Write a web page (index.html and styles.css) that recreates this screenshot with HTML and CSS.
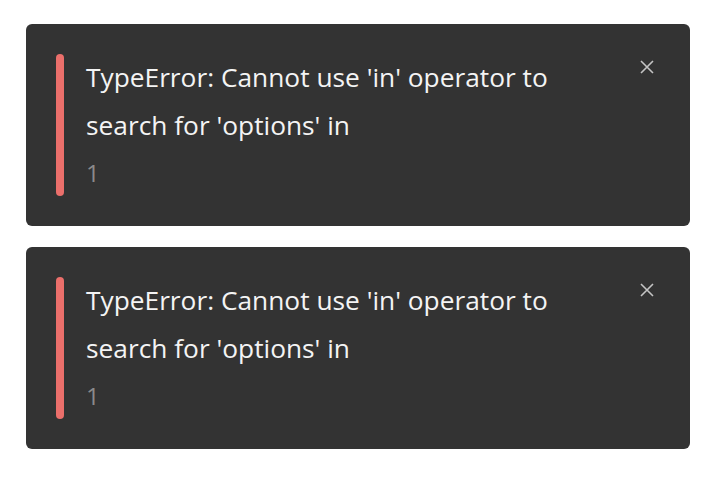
FILE: index.html
```html
<!DOCTYPE html>
<html lang="en">
<head>
<meta charset="utf-8">
<title>Errors</title>
<link rel="stylesheet" href="styles.css">
</head>
<body>
  <div class="list">
    <div class="toast">
      <div class="bar"></div>
      <div class="content">
        <div class="message">TypeError: Cannot use 'in' operator to search for 'options' in</div>
        <div class="count">1</div>
      </div>
      <button class="close" aria-label="Close">
        <svg width="14" height="14" viewBox="0 0 14 14"><path d="M1 1L13 13M13 1L1 13" stroke="#c4c4c4" stroke-width="1.6" fill="none"/></svg>
      </button>
    </div>
    <div class="toast">
      <div class="bar"></div>
      <div class="content">
        <div class="message">TypeError: Cannot use 'in' operator to search for 'options' in</div>
        <div class="count">1</div>
      </div>
      <button class="close" aria-label="Close">
        <svg width="14" height="14" viewBox="0 0 14 14"><path d="M1 1L13 13M13 1L1 13" stroke="#c4c4c4" stroke-width="1.6" fill="none"/></svg>
      </button>
    </div>
  </div>
</body>
</html>
```

FILE: styles.css
```css
html, body {
  margin: 0;
  padding: 0;
  background: #ffffff;
}
body {
  padding: 24px 28px 0 26px;
  font-family: "Open Sans", "Noto Sans", sans-serif;
}
.list {
  display: flex;
  flex-direction: column;
  gap: 21px;
  width: 664px;
}
.toast {
  display: flex;
  align-items: stretch;
  background: #333333;
  border-radius: 6px;
  padding: 30px;
}
.bar {
  width: 8px;
  flex: none;
  background: #eb6f6b;
  border-radius: 4px;
}
.content {
  flex: 1;
  padding-left: 22px;
  padding-right: 30px;
}
.message {
  color: #f4f4f4;
  font-size: 26.3px;
  line-height: 48px;
  margin-top: -1px;
}
.count {
  color: #8a8a8a;
  font-size: 24px;
  line-height: 47px;
}
.close {
  flex: none;
  align-self: flex-start;
  width: 24px;
  height: 24px;
  margin-top: 1px;
  margin-right: 1px;
  padding: 0;
  border: 0;
  background: transparent;
  display: flex;
  align-items: center;
  justify-content: center;
}
```
